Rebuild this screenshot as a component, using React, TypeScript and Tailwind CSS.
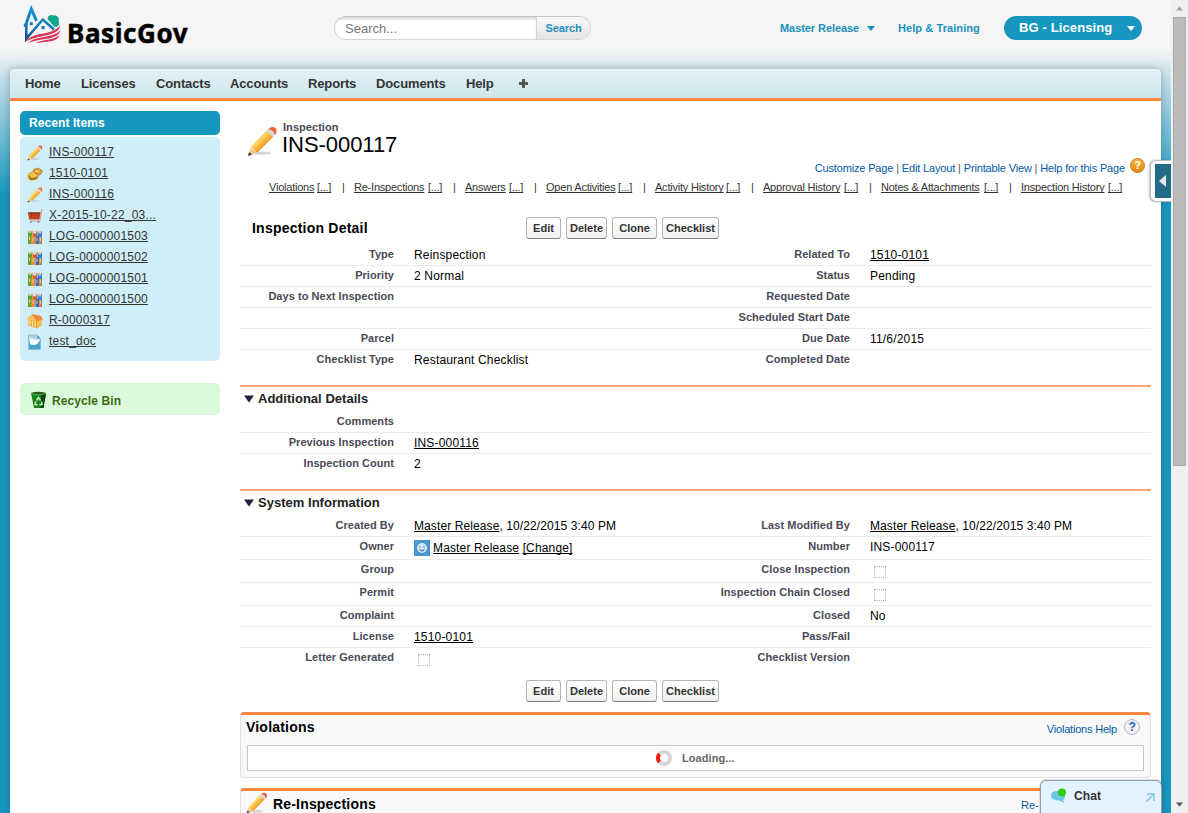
import type { ReactNode } from "react";

const SANS = "font-['Liberation_Sans',Arial,sans-serif]";

function Logo() {
  return (
    <svg className="mt-[5px] h-10 w-[38px] shrink-0" viewBox="0 0 38 40">
      <defs>
        <linearGradient id="roof" gradientUnits="userSpaceOnUse" x1="0" y1="0" x2="0" y2="36">
          <stop offset="0" stopColor="#1195da" />
          <stop offset="0.600" stopColor="#167bbd" />
          <stop offset="1" stopColor="#14457f" />
        </linearGradient>
      </defs>
      <path d="M24.500 14 C24.500 10.500 28 9 31 10.500 C34 10 37 13 35.500 16 C37.500 19 35 22.500 31.500 22Z" fill="#10a98b" />
      <path d="M0.800 20.500 H2.800 M2.500 20.500 L8.300 4 L13.500 15.800" stroke="url(#roof)" strokeWidth="3" fill="none" />
      <path d="M6.800 6 L8.300 0.500 L9.800 6Z" fill="#1195da" />
      <path d="M3.300 18 V33.500 L19.800 14.500 L31 24.500" stroke="url(#roof)" strokeWidth="2.600" fill="none" />
      <rect x="6.800" y="17.200" width="3" height="3" fill="#1b76b5" />
      <rect x="18.500" y="21" width="3.200" height="3.200" fill="#1b76b5" />
      <path d="M1.500 37.500 C11 25 28 32 36.800 20.500 C37 32 14 29 1.500 37.500Z" fill="#dc3358" />
      <path d="M5 38 C14 30 29 34 36.800 25.500 C36.500 35 17 33 5 38Z" fill="#dc3358" />
      <path d="M12 38.500 C20 33.500 30 36 36.300 30 C35 38 22 36 12 38.500Z" fill="#dc3358" />
    </svg>
  );
}

function Pencil({ className }: { className: string }) {
  return (
    <svg className={className} viewBox="0 0 32 32">
      <defs>
        <linearGradient id="wood" x1="0" y1="0" x2="1" y2="1">
          <stop offset="0.300" stopColor="#fde58a" />
          <stop offset="0.500" stopColor="#fbc043" />
          <stop offset="0.700" stopColor="#e58a1f" />
        </linearGradient>
      </defs>
      <ellipse cx="15" cy="28" rx="10" ry="1.800" fill="#c4c4c4" opacity="0.700" />
      <path d="M1 31 L4 22 L10.500 27 Z" fill="#efcb92" />
      <path d="M1 31 L2 27 L5.500 29.300 Z" fill="#4a3a2c" />
      <path d="M4 21.500 L20 4.500 L27 11 L10.500 27.500 Z" fill="url(#wood)" />
      <path d="M20 4.500 L23 2 L29.500 8.500 L27 11 Z" fill="#d4d8de" />
      <path d="M22 3 Q26 -0.500 29.500 2 Q32 5.500 29 9.500 Q28 5 22 3Z" fill="#e9683a" />
    </svg>
  );
}

function Ticket() {
  return (
    <svg className="size-4" viewBox="0 0 16 16">
      <path d="M1 8 L6 5 L8 8 L12 9.500 L10 13.500 L4 14.500 L1 12Z" fill="#c98a15" />
      <path d="M1 8.500 L7 5.500 L11 10 L5 12Z" fill="#f4c14a" />
      <path d="M6 4 L11 2 L15.500 5 L13 9 L9 8Z" fill="#e0a12a" stroke="#a86c0c" strokeWidth="0.700" />
      <path d="M8 5.500 L12.500 5" stroke="#ffe7a0" strokeWidth="1.200" />
      <path d="M2 12.500 L5 13.500 L9 12" stroke="#8a5a10" strokeWidth="0.900" fill="none" />
    </svg>
  );
}

function Cart() {
  return (
    <svg className="size-4" viewBox="0 0 16 16">
      <path d="M1 4.500 H13.500 L12.500 11.500 H2Z" fill="#d04a20" />
      <path d="M1 5 H13.500" stroke="#5c2414" strokeWidth="1.200" />
      <path d="M1.500 7.500 H13 M2 9.800 H12.500 M4.500 5 V11 M7.500 5 V11 M10.500 5 V11" stroke="#9c3213" strokeWidth="0.500" />
      <path d="M14.800 1 L12.800 13 H3" stroke="#c99a90" strokeWidth="1.100" fill="none" />
      <circle cx="4" cy="14" r="1.100" fill="#8a8a8a" />
      <circle cx="11.500" cy="14" r="1.100" fill="#8a8a8a" />
    </svg>
  );
}

function People() {
  return (
    <svg className="size-4" viewBox="0 0 16 16">
      <path d="M1 1.500 L2 4 H4 L5 1.500 V15 H1Z" fill="#58a62f" />
      <path d="M5.500 1 L6.500 4.500 H9 L10 1 V8 H5.500Z" fill="#dc5a26" />
      <path d="M10.500 1.500 L12 4.500 H13.500 L15 1.500 V15 H10.500Z" fill="#3a7fd0" />
      <path d="M4 7 H8 V15 H4Z" fill="#f08a2c" />
      <path d="M8.500 7 H11.500 V15 H8.500Z" fill="#2d69be" />
      <path d="M12 8 H14.500 V15 H12Z" fill="#e8802c" />
      <path d="M2.500 7.500 V11 M6 8.500 V12 M10 8.500 V12 M13.300 8.500 V12" stroke="#ffe2a8" strokeWidth="0.800" />
      <circle cx="3" cy="2.800" r="1.100" fill="#f3b36a" />
      <circle cx="7.800" cy="2.300" r="1.100" fill="#f6c78c" />
      <circle cx="12.800" cy="2.800" r="1.100" fill="#f3b36a" />
    </svg>
  );
}

function Bank() {
  return (
    <svg className="size-4" viewBox="0 0 16 16">
      <path d="M0 6 L6 1 L14 3 L16 6.500 L10 9 L1 7Z" fill="#f08a3c" />
      <path d="M0 6 L5.500 2.500 L10 8.500 L1 7Z" fill="#fbc661" />
      <path d="M1.500 7 L10 8.500 V15.500 L1.500 12.500Z" fill="#e8a02c" />
      <path d="M10 8.500 L15 6.500 V12.500 L10 15.500Z" fill="#f7bd55" />
      <path d="M3 7.500 V12.500 M5.500 8 V13.500 M8.200 8.500 V14.500" stroke="#ffe49c" strokeWidth="1.300" />
    </svg>
  );
}

function Doc() {
  return (
    <svg className="size-4" viewBox="0 0 16 16">
      <path d="M1.500 1 H10 L13.500 4.500 V15.500 H1.500Z" fill="#a9d4e9" stroke="#7fb6d3" strokeWidth="0.800" />
      <path d="M2 8 H13 V15 H2Z" fill="#46a5cd" />
      <path d="M2.500 4.500 H6 L7 5.500 H12.500 L10.500 10 Q6 12 3 10Z" fill="#fff" />
      <path d="M10 1 V4.500 H13.500Z" fill="#4b9cc6" />
    </svg>
  );
}

function Bin() {
  return (
    <svg className="mt-[2px] h-[18px] w-[17px]" viewBox="0 0 17 18">
      <path d="M1 2 H16 L13.500 17 H4Z" fill="#1c841e" />
      <path d="M11 3 H16 L13.500 17 H10.500Z" fill="#0c4210" />
      <ellipse cx="8.500" cy="2.200" rx="7.500" ry="1.500" fill="#2c5a22" />
      <path d="M1 2 Q8.500 6 16 2" stroke="#4fbd45" fill="none" />
      <path d="M6.500 9.500 L8.500 6.500 L10.500 9.500 M11.500 10.500 L12 13.500 L9.500 14 M7.500 14 L5 13.500 L5.800 10.500" stroke="#c4ecba" strokeWidth="1.500" fill="none" />
    </svg>
  );
}

const NAV: [string, string][] = [
  ["Home", "w-[56px]"],
  ["Licenses", "w-[75px]"],
  ["Contacts", "w-[74px]"],
  ["Accounts", "w-[78px]"],
  ["Reports", "w-[68px]"],
  ["Documents", "w-[90px]"],
  ["Help", "w-[52px]"],
];

const RECENT: [ReactNode, string][] = [
  [<Pencil className="size-4" />, "INS-000117"],
  [<Ticket />, "1510-0101"],
  [<Pencil className="size-4" />, "INS-000116"],
  [<Cart />, "X-2015-10-22_03..."],
  [<People />, "LOG-0000001503"],
  [<People />, "LOG-0000001502"],
  [<People />, "LOG-0000001501"],
  [<People />, "LOG-0000001500"],
  [<Bank />, "R-0000317"],
  [<Doc />, "test_doc"],
];

const RELATED: [string, string, string][] = [
  ["Violations", "w-[73px]", "w-[45px]"],
  ["Re-Inspections", "w-[99px]", "w-[71px]"],
  ["Answers", "w-[69px]", "w-[41px]"],
  ["Open Activities", "w-[97px]", "w-[69px]"],
  ["Activity History", "w-[96px]", "w-[68px]"],
  ["Approval History", "w-[106px]", "w-[78px]"],
  ["Notes & Attachments", "w-[128px]", "w-[100px]"],
  ["Inspection History", "w-[110px]", "w-[84px]"],
];

function U({ children }: { children: ReactNode }) {
  return <a className="underline decoration-1 underline-offset-1 [text-decoration-skip-ink:none]">{children}</a>;
}

function Box() {
  return <span className="ml-1 mt-[6px] block size-3 border border-dotted border-[#b5b5b5]" />;
}

type Cell = [string, ReactNode?];

function Row({ left, right, tall, last }: { left: Cell; right?: Cell; tall?: boolean; last?: boolean }) {
  const label = "w-[154px] shrink-0 text-right text-[11px] leading-[18px] font-bold tracking-[0.040px] text-[#4a4a56] whitespace-nowrap";
  return (
    <div className={`flex ${tall ? "h-[23px]" : "h-[21px]"} ${last ? "" : "border-b border-[#ececec]"}`}>
      <div className={label}>{left[0]}</div>
      <div className="w-[302px] shrink-0 pl-5 text-xs leading-[20px] tracking-[0.180px]">{left[1]}</div>
      <div className={label}>{right?.[0]}</div>
      <div className="flex-1 pl-5 text-xs leading-[20px] tracking-[0.180px]">{right?.[1]}</div>
    </div>
  );
}

function Buttons() {
  const b =
    "h-[22px] rounded-[3px] border border-[#b5b5b5] border-b-[#7f7f7f] bg-linear-to-b from-white to-[#f0f0f0] text-[11px] leading-[20px] font-bold text-[#333]";
  return (
    <div className="flex gap-[5px]">
      <button className={`${b} w-[35px]`}>Edit</button>
      <button className={`${b} w-[41px]`}>Delete</button>
      <button className={`${b} w-[45px]`}>Clone</button>
      <button className={`${b} w-[57px]`}>Checklist</button>
    </div>
  );
}

function SectionTitle({ children }: { children: ReactNode }) {
  return (
    <div className="flex h-[27px] items-center border-t-2 border-[#ffa573] pb-[2px] pl-1 text-[13px] font-bold tracking-[0.020px] text-[#222]">
      <svg className="mr-1 h-2 w-[10px]" viewBox="0 0 10 8">
        <path d="M0 0.500 H10 L5 7.500Z" fill="#22223a" />
      </svg>
      {children}
    </div>
  );
}

const stamp = (
  <span className="tracking-[0.100px]">
    <U>Master Release</U>, 10/22/2015 3:40 PM
  </span>
);

function Header() {
  return (
    <header className="flex h-[69px] shrink-0 pl-[23px]">
      <Logo />
      <div className="ml-[6px] mt-[14px] w-[266px] font-['Noto_Sans',sans-serif] text-[26px] leading-[38px] font-bold tracking-[0.600px] text-black [-webkit-text-stroke:0.5px_black]">
        BasicGov
      </div>
      <div className="mt-4 ml-px flex h-6 w-[257px] overflow-hidden rounded-full border border-[#d6d6d6] border-t-[#c4c4c4] bg-white">
        <div className="w-[201px] pl-[10px] text-[13px] leading-[23px] text-[#777] shadow-[inset_0_3px_3px_-1px_#d4d4d4]">Search...</div>
        <div className="flex-1 border-l border-[#d2d2d2] bg-linear-to-b from-[#fafafa] to-[#e4e4e4] text-center text-[11px] leading-[23px] font-bold tracking-[-0.100px] text-[#1f8fbe]">
          Search
        </div>
      </div>
      <div className="mt-4 ml-[189px] flex text-[11px] leading-6 font-bold text-[#1b91bd]">
        <span className="w-[87px] tracking-[-0.070px]">Master Release</span>
        <svg className="mt-[10px] h-[5px] w-2" viewBox="0 0 8 5">
          <path d="M0 0 H8 L4 5Z" fill="#1b91bd" />
        </svg>
        <span className="ml-[23px] w-[106px] tracking-[0.080px]">Help &amp; Training</span>
        <div className="flex h-6 w-[138px] rounded-full bg-[#1797c0] pl-[15px] text-[13px] tracking-[0.120px] text-white">
          <span className="w-[108px]">BG - Licensing</span>
          <svg className="mt-[10px] h-[5px] w-2" viewBox="0 0 8 5">
            <path d="M0 0 H8 L4 5Z" fill="#fff" />
          </svg>
        </div>
      </div>
    </header>
  );
}

function Sidebar() {
  return (
    <aside className="w-[200px] shrink-0 pt-[10px]">
      <div className="h-6 rounded-[5px] bg-[#1797c0] pl-[9px] text-xs leading-6 font-bold tracking-[0.080px] text-white">Recent Items</div>
      <div className="mt-[2px] h-[224px] rounded-[5px] bg-[#cfeef8] pt-[5px] pl-[7px]">
        {RECENT.map(([icon, text]) => (
          <div key={text} className="flex h-[21px] items-start text-xs leading-[20px] tracking-[0.200px] text-[#333]">
            <span className="mt-[3px] mr-[6px]">{icon}</span>
            <U>{text}</U>
          </div>
        ))}
      </div>
      <div className="mt-[22px] flex h-8 items-center rounded-[5px] bg-[#dafadb] pl-[10px] text-xs font-bold text-[#3b6a12]">
        <Bin />
        <span className="mt-1 ml-[5px] tracking-[0.100px]">Recycle Bin</span>
      </div>
    </aside>
  );
}

function Detail() {
  return (
    <main className="ml-5 w-[911px] shrink-0 text-black">
      <div className="flex h-[58px] pt-[21px]">
        <Pencil className="mt-[4px] ml-[7px] h-[31px] w-[31px]" />
        <div className="ml-[4px]">
          <div className="pl-px text-[11px] leading-[11px] font-bold tracking-[0.050px] text-[#4a4a56]">Inspection</div>
          <div className="text-[22px] leading-[24px] tracking-[-0.050px]">INS-000117</div>
        </div>
      </div>
      <div className="flex h-[18px] justify-end pr-[6px] text-[11px] leading-[18px] tracking-[-0.150px] text-[#015ba7]">
        <span className="pr-[5px]">
          Customize Page<span className="text-[#555]"> | </span>Edit Layout<span className="text-[#555]"> | </span>Printable View
          <span className="text-[#555]"> | </span>Help for this Page
        </span>
        <span className="-mt-px size-[15px] rounded-full border border-[#c77b0c] bg-linear-to-b from-[#f7b23e] to-[#e68a0a] text-center text-[11px] leading-[13px] font-bold text-white">
          ?
        </span>
      </div>
      <div className="flex h-[20px] pl-[29px] text-[11px] leading-[20px] tracking-[-0.220px] whitespace-nowrap text-[#333]">
        {RELATED.map(([name, w, inner], i) => (
          <div key={name} className="flex">
            <span className={`${w} flex`}>
              <span className={`${inner} mr-[3px]`}>
                <U>{name}</U>
              </span>
              <U>[...]</U>
            </span>
            {i < RELATED.length - 1 && <span className="w-3">|</span>}
          </div>
        ))}
      </div>
      <div className="flex h-[48px] pt-[20px] pl-3">
        <h2 className="w-[274px] text-sm leading-[22px] font-bold tracking-[0.220px]">Inspection Detail</h2>
        <Buttons />
      </div>
      <div className="h-[140px]">
        <Row left={["Type", "Reinspection"]} right={["Related To", <U>1510-0101</U>]} />
        <Row left={["Priority", "2 Normal"]} right={["Status", "Pending"]} />
        <Row left={["Days to Next Inspection"]} right={["Requested Date"]} />
        <Row left={[""]} right={["Scheduled Start Date"]} />
        <Row left={["Parcel"]} right={["Due Date", "11/6/2015"]} />
        <Row left={["Checklist Type", "Restaurant Checklist"]} right={["Completed Date"]} last />
      </div>
      <div className="h-[104px]">
        <SectionTitle>Additional Details</SectionTitle>
        <Row left={["Comments"]} />
        <Row left={["Previous Inspection", <U>INS-000116</U>]} />
        <Row left={["Inspection Count", "2"]} last />
      </div>
      <div className="h-[191px]">
        <SectionTitle>System Information</SectionTitle>
        <Row left={["Created By", stamp]} right={["Last Modified By", stamp]} />
        <Row
          tall
          left={[
            "Owner",
            <div className="flex items-start leading-[23px] tracking-[0.150px]">
              <svg className="mt-[3px] mr-[3px] size-4" viewBox="0 0 16 16">
                <path d="M0 0 H16 V16 H0Z" fill="#4796cf" />
                <circle cx="8" cy="8" r="5" fill="#d8ebf8" />
                <path d="M6 6 V7.500 M10 6 V7.500 M5.500 9.500 Q8 12 10.500 9.500" stroke="#3a80b8" strokeWidth="1.200" fill="none" />
              </svg>
              <span>
                <U>Master Release</U> <U>[Change]</U>
              </span>
            </div>,
          ]}
          right={["Number", "INS-000117"]}
        />
        <Row tall left={["Group"]} right={["Close Inspection", <Box />]} />
        <Row tall left={["Permit"]} right={["Inspection Chain Closed", <Box />]} />
        <Row left={["Complaint"]} right={["Closed", "No"]} />
        <Row left={["License", <U>1510-0101</U>]} right={["Pass/Fail"]} />
        <Row left={["Letter Generated", <Box />]} right={["Checklist Version"]} last />
      </div>
      <div className="h-8 pl-[286px]">
        <Buttons />
      </div>
      <section className="h-[66px] rounded-[4px] border border-t-[3px] border-[#e0e0e0] border-t-[#ff8541] bg-[#f8f8f8] px-[6px]">
        <div className="flex h-[30px] justify-between">
          <h3 className="-ml-px text-sm leading-[24px] font-bold tracking-[0.200px]">Violations</h3>
          <div className="flex pr-[4px] text-[11px] leading-[29px] tracking-[-0.200px] text-[#015ba7]">
            Violations Help
            <span className="mt-[4px] ml-[7px] size-4 rounded-full border border-[#bbb] bg-[#f1f1f1] text-center text-[12px] leading-[14px] font-bold text-[#1f63c4]">
              ?
            </span>
          </div>
        </div>
        <div className="flex h-[26px] items-center border border-[#c7c7c7] bg-white pl-[408px] text-[11px] font-bold tracking-[0.080px] text-[#666]">
          <svg className="mr-[10px] size-4" viewBox="0 0 16 16">
            <circle cx="8" cy="8" r="6" fill="none" stroke="#d6d6d6" strokeWidth="4" />
            <path d="M3.500 4 A6 6 0 0 0 3.500 12" fill="none" stroke="#f31c0d" strokeWidth="4" />
          </svg>
          Loading...
        </div>
      </section>
      <section className="mt-[10px] flex h-[66px] rounded-[4px] border border-t-[3px] border-[#e0e0e0] border-t-[#ff8541] bg-[#f8f8f8] pl-[5px]">
        <Pencil className="mt-px size-[22px]" />
        <h3 className="ml-[5px] w-[748px] text-sm leading-[26px] font-bold tracking-[0.180px]">Re-Inspections</h3>
        <span className="w-[19px] overflow-hidden text-[11px] leading-[29px] whitespace-nowrap text-[#015ba7]">Re-</span>
      </section>
    </main>
  );
}

export default function App() {
  return (
    <div className={`relative flex h-[813px] w-[1188px] overflow-hidden ${SANS}`}>
      <div className="flex h-full w-[1171px] flex-col bg-[linear-gradient(#f5f5f5_50px,#d9e8ee_66px,#1797c0_195px)]">
        <Header />
        <div className="mx-[10px] flex flex-1 flex-col overflow-hidden rounded-t-[5px] bg-white shadow-[0_0_8px_rgba(20,60,80,0.35)]">
          <nav className="flex h-8 shrink-0 border-b-[3px] border-[#ff8541] bg-linear-to-b from-[#e3f1f6] to-[#cde7ee] pl-[15px] text-[13px] leading-[29px] font-bold tracking-[-0.130px] text-[#333]">
            {NAV.map(([name, w]) => (
              <span key={name} className={w}>
                {name}
              </span>
            ))}
            <svg className="mt-[10px] ml-px size-[9px]" viewBox="0 0 9 9">
              <path d="M3 0 H6 V3 H9 V6 H6 V9 H3 V6 H0 V3 H3Z" fill="#555" />
            </svg>
          </nav>
          <div className="flex pl-[10px]">
            <Sidebar />
            <Detail />
          </div>
        </div>
      </div>
      <div className="flex w-[17px] shrink-0 flex-col items-center justify-between bg-[#f0f0f0]">
        <div className="flex flex-col items-center">
          <svg className="my-[6px] h-[5px] w-[7px]" viewBox="0 0 7 5">
            <path d="M0 4.500 H7 L3.500 0.500Z" fill="#a3a3a3" />
          </svg>
          <div className="h-[449px] w-[13px] border border-[#a8a8a8] bg-[#bcbcbc]" />
        </div>
        <svg className="mb-[6px] h-[5px] w-[7px]" viewBox="0 0 7 5">
          <path d="M0 0.500 H7 L3.500 4.500Z" fill="#505050" />
        </svg>
      </div>
      <div className="absolute top-[160px] left-[1150px] h-[42px] w-[21px] rounded-l-[6px] border-y border-l border-[#bbb] bg-white py-[3px] pl-1 shadow-[-1px_0_2px_rgba(0,0,0,0.25)]">
        <div className="flex h-full items-center bg-[#236c87] pl-[4px]">
          <svg className="h-3 w-[7px]" viewBox="0 0 7 12">
            <path d="M7 0 V12 L0 6Z" fill="#e8e8e8" />
          </svg>
        </div>
      </div>
      <div className="absolute top-[780px] left-[1040px] flex h-[34px] w-[122px] rounded-t-[6px] border border-[#9a9a9a] bg-[#e3f3ff] pl-[10px] shadow-[0_0_2px_rgba(0,0,0,0.4)]">
        <svg className="mt-[7px] h-4 w-[17px]" viewBox="0 0 17 16">
          <path d="M0 7.500 Q0 3 7 3 Q14 3 14 8 Q14 11 12 12 L13.500 15 L8.500 12.500 Q0 12.500 0 7.500Z" fill="#6cc6e6" />
          <circle cx="11" cy="4.500" r="4" fill="#35c90d" />
        </svg>
        <span className="ml-[6px] w-[71px] text-xs leading-[30px] font-bold tracking-[0.100px] text-[#333]">Chat</span>
        <svg className="mt-[12px] size-[10px]" viewBox="0 0 10 10">
          <path d="M2 1 H9 V8 M9 1 L1.500 8.500" stroke="#9ad2e4" strokeWidth="2" fill="none" />
        </svg>
      </div>
    </div>
  );
}
